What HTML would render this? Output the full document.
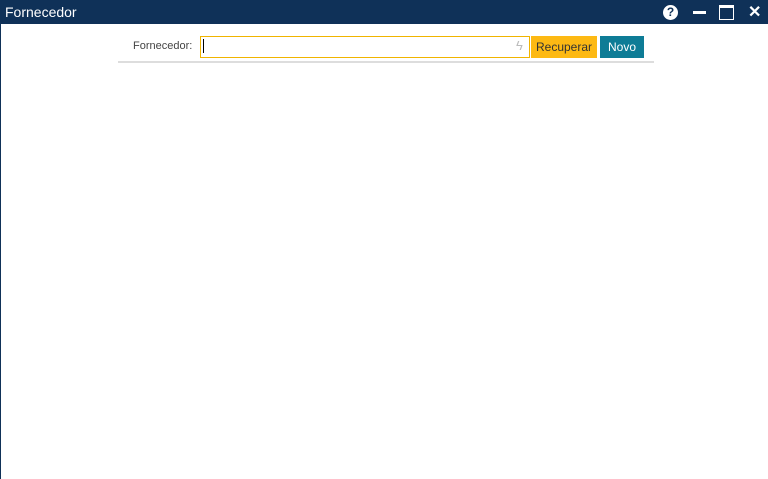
<!DOCTYPE html><html><head><style>
body{margin:0;width:768px;height:479px;background:#fff;font-family:"Liberation Sans",sans-serif;position:relative;overflow:hidden}
.tb{position:absolute;left:0;top:0;width:768px;height:24px;background:#0f3158;color:#fff;font-size:14px;line-height:24px;padding-left:5px;box-sizing:border-box}
.a{position:absolute}
</style></head><body>
<div class="a" style="left:0;top:0;width:1px;height:479px;background:#0f3158"></div>
<div class="tb">Fornecedor</div>
<div class="a" style="left:663px;top:5px;width:15px;height:15px;border-radius:50%;background:#fff;color:#0f3158;font-size:12px;font-weight:bold;text-align:center;line-height:15px">?</div>
<div class="a" style="left:693px;top:11px;width:13px;height:3px;background:#fff"></div>
<div class="a" style="left:719px;top:5px;width:13px;height:11px;border:1px solid #fff;border-top-width:3px"></div>
<div class="a" style="left:748px;top:2px;color:#fff;font-size:16px;font-weight:bold">✕</div>
<div class="a" style="left:133px;top:40px;font-size:11px;color:#444">Fornecedor:</div>
<div class="a" style="left:200px;top:36px;width:330px;height:22px;border:1px solid #f0b400;box-sizing:border-box"></div>
<div class="a" style="left:203px;top:39px;width:1px;height:14px;background:#000"></div>
<div class="a" style="left:516px;top:38px;color:#bbb;font-size:13px">ϟ</div>
<div class="a" style="left:531px;top:36px;width:66px;height:22px;background:#fdb913;font-size:12px;color:#333;text-align:center;line-height:22px">Recuperar</div>
<div class="a" style="left:600px;top:36px;width:44px;height:22px;background:#0e7c96;font-size:12px;color:#fff;text-align:center;line-height:22px">Novo</div>
<div class="a" style="left:118px;top:61px;width:536px;height:2px;background:#ddd"></div>
</body></html>
